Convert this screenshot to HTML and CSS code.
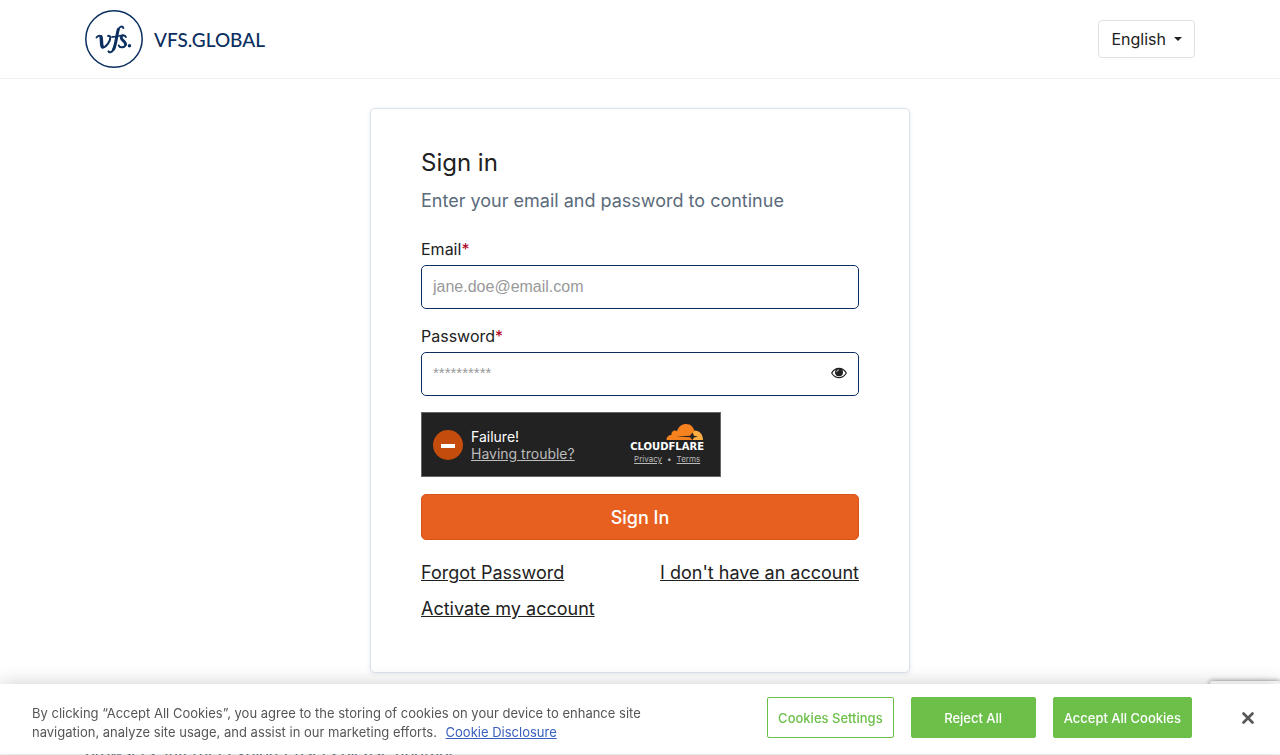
FILE: index.html
```html
<!DOCTYPE html>
<html lang="en">
<head>
    <meta charset="UTF-8">
    <meta name="viewport" content="width=device-width, initial-scale=1.0">
    <title>Sign in</title>
    <link rel="stylesheet" href="styles.css">
</head>
<body>
    <header class="site-header">
        <div class="container header-row">
            <a href="#" class="logo" aria-label="VFS.GLOBAL">
                <svg class="logo-mark" viewBox="0 0 58 58" fill="none" stroke="#0b2f5f" stroke-linecap="round" stroke-linejoin="round">
                    <circle cx="29" cy="29" r="28.2" stroke-width="1.5"/>
                    <path d="M11.500 27.500C12.500 25.800 15 24.800 16 26.800" stroke-width="1.800"/>
                    <path d="M16 26.800C17 29.500 15.800 35 17.500 37" stroke-width="3.400"/>
                    <path d="M17.500 37.300C21 37.500 25.500 31 25.300 27.500C25.200 26 24.200 25.500 23.200 26" stroke-width="2"/>
                    <path d="M38.300 18C37.500 15.600 34.600 16.200 33.300 19.500" stroke-width="2"/>
                    <path d="M33.300 19.500C31.700 24 31.200 34 28.700 39" stroke-width="3"/>
                    <path d="M28.700 39C27.300 42.300 24.300 43.200 23.500 41.300" stroke-width="2"/>
                    <path d="M27 26.800C30.500 27.200 34 26 38 25" stroke-width="1.700"/>
                    <path d="M40.800 27C40 24.800 36.500 25 36.200 27.500" stroke-width="2"/>
                    <path d="M36.200 27.500C36.300 30.300 41 31.500 40.600 34.300" stroke-width="3"/>
                    <path d="M40.600 34.300C40 38 34.700 38.200 33.800 35.500" stroke-width="2"/>
                    <circle cx="44.500" cy="35.700" r="1.700" fill="#0b2f5f" stroke="none"/>
                </svg>
                <span class="logo-text">VFS.GLOBAL</span>
            </a>
            <button type="button" class="lang-btn">English <span class="caret"></span></button>
        </div>
    </header>

    <main class="container">
        <form class="card" onsubmit="return false">
            <h1>Sign in</h1>
            <p class="subtitle">Enter your email and password to continue</p>

            <label for="email">Email<span class="required">*</span></label>
            <input type="email" id="email" class="field" placeholder="jane.doe@email.com">

            <label for="password">Password<span class="required">*</span></label>
            <div class="field password-field">
                <input type="password" id="password" placeholder="**********">
                <button type="button" class="eye-btn" aria-label="Show password" onclick="togglePassword()">
                    <svg viewBox="0 0 16 12" width="16" height="12">
                        <path d="M0.700 6C2.400 3 5 1.300 8 1.300S13.600 3 15.300 6C13.600 9 11 10.700 8 10.700S2.400 9 0.700 6Z" fill="none" stroke="#212121" stroke-width="1.200"/>
                        <circle cx="8" cy="5.300" r="4" fill="#212121"/>
                        <path d="M5.700 5A2.400 2.400 0 0 1 8 2.800" fill="none" stroke="#fff" stroke-width="0.700"/>
                    </svg>
                </button>
            </div>

            <!-- Challenge widget -->
            <div class="challenge">
                <svg class="challenge-icon" viewBox="0 0 30 30">
                    <circle cx="15" cy="15" r="15" fill="#c44d0e"/>
                    <rect x="8" y="14" width="14" height="4" fill="#fff"/>
                </svg>
                <div class="challenge-text">
                    <span>Failure!</span>
                    <a href="#">Having trouble?</a>
                </div>
                <div class="challenge-brand">
                    <svg viewBox="0 0 38 18" width="38" height="18">
                        <path d="M0.500 17C0.500 14 2.500 12 5.500 12C5 8.500 8.500 6.500 11 8.200C12.500 3.500 16 1 20 1C25 1 28 4.500 28.500 9L26.500 17Z" fill="#f6821f"/>
                        <path d="M28.500 7.500C33.500 7.500 37 11.500 37 17H26.500L25 14Z" fill="#fbad41"/>
                        <path d="M10 13.500L24 12.800L26.500 9.500L28 12.800L32 13.500L28 14.500L26.500 17L24 14.300Z" fill="#222"/>
                    </svg>
                    <span class="brand-name">CLOUDFLARE</span>
                    <div class="brand-links"><a href="#">Privacy</a><span>•</span><a href="#">Terms</a></div>
                </div>
            </div>

            <button type="submit" class="submit-btn">Sign In</button>

            <div class="links">
                <a href="#">Forgot Password</a>
                <a href="#">I don't have an account</a>
                <a href="#">Activate my account</a>
            </div>
        </form>
    </main>

    <footer class="container site-footer">
        <p>browsers, Internet Explorer users please upgrade.</p>
    </footer>

    <div class="badge"></div>

    <!-- Cookie banner -->
    <div class="cookie-banner" id="cookieBanner">
        <p class="cookie-text">By clicking “Accept All Cookies”, you agree to the storing of cookies on your device to enhance site navigation, analyze site usage, and assist in our marketing efforts. <a href="#">Cookie Disclosure</a></p>
        <div class="cookie-actions">
            <button type="button" class="cookie-btn outline">Cookies Settings</button>
            <button type="button" class="cookie-btn" onclick="closeBanner()">Reject All</button>
            <button type="button" class="cookie-btn" onclick="closeBanner()">Accept All Cookies</button>
        </div>
        <button type="button" class="close-btn" aria-label="Close" onclick="closeBanner()">
            <svg viewBox="0 0 12 12" width="12" height="12"><path d="M1.500 1.500L10.500 10.500M10.500 1.500L1.500 10.500" stroke="#565656" stroke-width="2.600" stroke-linecap="round"/></svg>
        </button>
    </div>

    <script>
        function togglePassword() {
            const input = document.getElementById('password');
            input.type = input.type === 'password' ? 'text' : 'password';
        }

        function closeBanner() {
            document.getElementById('cookieBanner').style.display = 'none';
        }
    </script>
</body>
</html>
```
FILE: styles.css
```css
* {
    box-sizing: border-box;
}
body {
    margin: 0;
    font-family: Inter, "Liberation Sans", sans-serif;
    font-size: 16px;
    line-height: 24px;
    color: #212121;
    background-color: #fff;
}
/* the page scrolls without a visible bar */
html {
    scrollbar-width: none;
}
button, input {
    font-family: inherit;
}
button {
    cursor: pointer;
}
a {
    color: inherit;
}
.container {
    max-width: 1140px;
    margin: 0 auto;
    padding: 0 15px;
}
.site-header {
    border-bottom: 1px solid #f2f2f2;
}
.header-row {
    display: flex;
    justify-content: space-between;
    align-items: center;
    height: 78px;
}
.logo {
    display: flex;
    align-items: center;
    gap: 11px;
    color: #0b2f5f;
    text-decoration: none;
}
.logo-mark {
    width: 58px;
    height: 58px;
}
.logo-text {
    padding-top: 2px;
    font-family: Lato, sans-serif;
    font-size: 19px;
    font-weight: 500;
}
.lang-btn {
    display: flex;
    align-items: center;
    gap: 8px;
    height: 38px;
    padding: 0 12px;
    border: 1px solid #dee2e6;
    border-radius: 4px;
    background-color: #fff;
    color: #212121;
    font-size: 16px;
}
.caret {
    border-top: 4px solid #212121;
    border-left: 4px solid transparent;
    border-right: 4px solid transparent;
}
.card {
    max-width: 540px;
    margin: 29px auto 0;
    padding: 36px 50px 51px;
    border: 1px solid #dce3ec;
    border-radius: 5px;
    box-shadow: 0 1px 4px rgba(0, 40, 100, 0.1);
}
h1 {
    margin: 0 0 8px;
    font-size: 24px;
    font-weight: 400;
    line-height: 36px;
}
.subtitle {
    margin: 0 0 24px;
    font-size: 18px;
    color: #5b6b7b;
}
label {
    display: block;
    margin-bottom: 4px;
}
.required {
    color: #b00020;
}
.field {
    width: 100%;
    height: 44px;
    margin-bottom: 15px;
    padding: 0 11px;
    border: 1px solid #0b2f5f;
    border-radius: 5px;
    background-color: #fff;
    font-family: "Liberation Sans", sans-serif;
    font-size: 16px;
}
.field::placeholder, .field input::placeholder {
    color: #999;
}
.password-field {
    display: flex;
    align-items: center;
    margin-bottom: 16px;
}
.password-field input {
    flex: 1;
    min-width: 0;
    padding: 0 0 4px;
    border: none;
    outline: none;
    font-size: 15px;
}
.eye-btn {
    display: flex;
    padding: 0 0 2px;
    border: none;
    background: none;
}
.challenge {
    display: flex;
    align-items: center;
    width: 300px;
    height: 65px;
    margin-bottom: 17px;
    padding: 0 16px 0 11px;
    border: 1px solid #666;
    background-color: #222;
    color: #fff;
}
.challenge-icon {
    width: 30px;
    height: 30px;
    margin-right: 8px;
}
.challenge-text {
    display: flex;
    flex: 1;
    flex-direction: column;
    font-size: 14px;
    line-height: 17px;
}
.challenge-text a, .brand-links {
    color: #bbb;
}
.challenge-brand {
    display: flex;
    flex-direction: column;
    align-items: flex-end;
}
.brand-name {
    font-family: "DejaVu Sans", sans-serif;
    font-size: 10px;
    font-weight: 700;
    line-height: 11px;
}
.brand-links {
    display: flex;
    gap: 5px;
    align-self: center;
    font-size: 8px;
    line-height: 14px;
}
.submit-btn {
    display: block;
    width: 100%;
    height: 46px;
    border: 1px solid #d4551a;
    border-radius: 5px;
    background-color: #e86020;
    color: #fff;
    font-size: 18px;
    font-weight: 500;
}
.links {
    display: flex;
    flex-wrap: wrap;
    justify-content: space-between;
    gap: 12px;
    margin-top: 21px;
    font-size: 18px;
}
.site-footer {
    color: #5b6b7b;
}
.site-footer p {
    margin: 67px 0 0;
}
.badge {
    position: fixed;
    right: 0;
    bottom: 14px;
    width: 70px;
    height: 60px;
    border-radius: 2px;
    box-shadow: 0 0 5px gray;
}
.cookie-banner {
    position: fixed;
    left: 0;
    right: 0;
    bottom: 1px;
    display: flex;
    align-items: center;
    min-height: 70px;
    padding: 0 26px 0 32px;
    background-color: #fff;
    box-shadow: 0 0 18px rgba(0, 0, 0, 0.2);
}
.cookie-text {
    max-width: 640px;
    margin: 8px auto 0 0;
    color: #565656;
    font-size: 13px;
    line-height: 19px;
}
.cookie-text a {
    margin-left: 5px;
    color: #3860be;
}
.cookie-actions {
    display: flex;
    gap: 17px;
    margin: 0 50px 3px 0;
}
.cookie-btn {
    min-width: 125px;
    height: 41px;
    padding: 0 10px;
    border: 1px solid #6cc04a;
    border-radius: 2px;
    background-color: #6cc04a;
    color: #fff;
    font-size: 13px;
    font-weight: 500;
}
.cookie-btn.outline {
    background-color: #fff;
    color: #6cc04a;
}
.close-btn {
    display: flex;
    margin-bottom: 3px;
    padding: 0;
    border: none;
    background: none;
}
```
